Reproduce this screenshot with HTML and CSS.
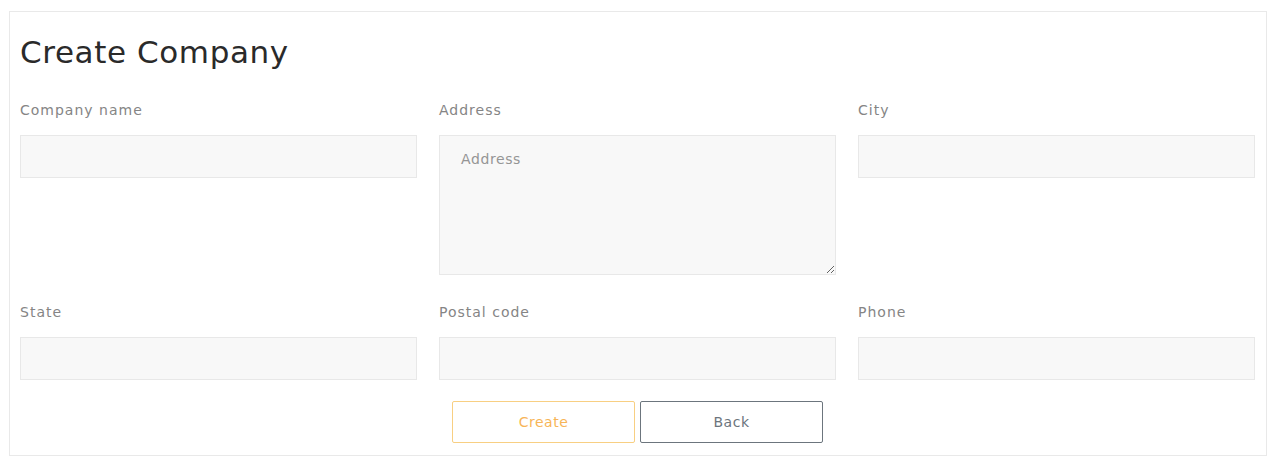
FILE: index.html
```html
<!DOCTYPE html>
<html lang="en">
<head>
<meta charset="utf-8">
<title>Create Company</title>
<link rel="stylesheet" href="styles.css">
</head>
<body>
<div class="card">
  <h1 class="title">Create Company</h1>
  <form class="form">
    <div class="grid">
      <div class="field">
        <label class="label">Company name</label>
        <input class="control" type="text">
      </div>
      <div class="field">
        <label class="label">Address</label>
        <textarea class="control area" placeholder="Address"></textarea>
      </div>
      <div class="field">
        <label class="label">City</label>
        <input class="control" type="text">
      </div>
      <div class="field">
        <label class="label">State</label>
        <input class="control" type="text">
      </div>
      <div class="field">
        <label class="label">Postal code</label>
        <input class="control" type="text">
      </div>
      <div class="field">
        <label class="label">Phone</label>
        <input class="control" type="text">
      </div>
    </div>
    <div class="actions">
      <button type="button" class="btn btn-create">Create</button>
      <button type="button" class="btn btn-back">Back</button>
    </div>
  </form>
</div>
</body>
</html>
```

FILE: styles.css
```css
* { box-sizing: border-box; }

html, body {
  margin: 0;
  background: #ffffff;
}

body {
  padding: 11px 13px 0 9px;
  font-family: "DejaVu Sans", "Open Sans", sans-serif;
  color: #333;
}

.card {
  border: 1px solid #e9e9e9;
  padding: 0 11px 12px 10px;
  background: #fff;
}

.title {
  margin: 21px 0 0 0;
  font-size: 31px;
  line-height: 38px;
  font-weight: 400;
  color: #2a2a2a;
  letter-spacing: 0.6px;
}

.form {
  margin-top: 28px;
}

.grid {
  display: grid;
  grid-template-columns: repeat(3, 1fr);
  column-gap: 22px;
  row-gap: 26px;
  align-items: start;
}

.field {
  display: flex;
  flex-direction: column;
}

.label {
  font-size: 14px;
  line-height: 21px;
  padding-top: 1px;
  font-weight: 400;
  color: #858585;
  margin-bottom: 14px;
  letter-spacing: 1px;
}

.control {
  height: 43px;
  width: 100%;
  background: #f8f8f8;
  border: 1px solid #e8e8e8;
  border-radius: 0;
  font-family: inherit;
  font-size: 14px;
  color: #555;
  outline: none;
  margin: 0;
}

.area {
  height: 140px;
  padding: 13px 21px;
  line-height: 21px;
  resize: vertical;
}

.area::placeholder {
  color: #959595;
  letter-spacing: 0.6px;
}

.actions {
  display: flex;
  justify-content: center;
  gap: 5px;
  margin-top: 21px;
}

.btn {
  width: 183px;
  height: 42px;
  background: #fff;
  border-radius: 2px;
  font-family: inherit;
  font-size: 14px;
  cursor: pointer;
  letter-spacing: 0.5px;
}

.btn-create {
  border: 1px solid #f8cf82;
  color: #f7b557;
}

.btn-back {
  border: 1px solid #6c757d;
  color: #6c757d;
}
```
